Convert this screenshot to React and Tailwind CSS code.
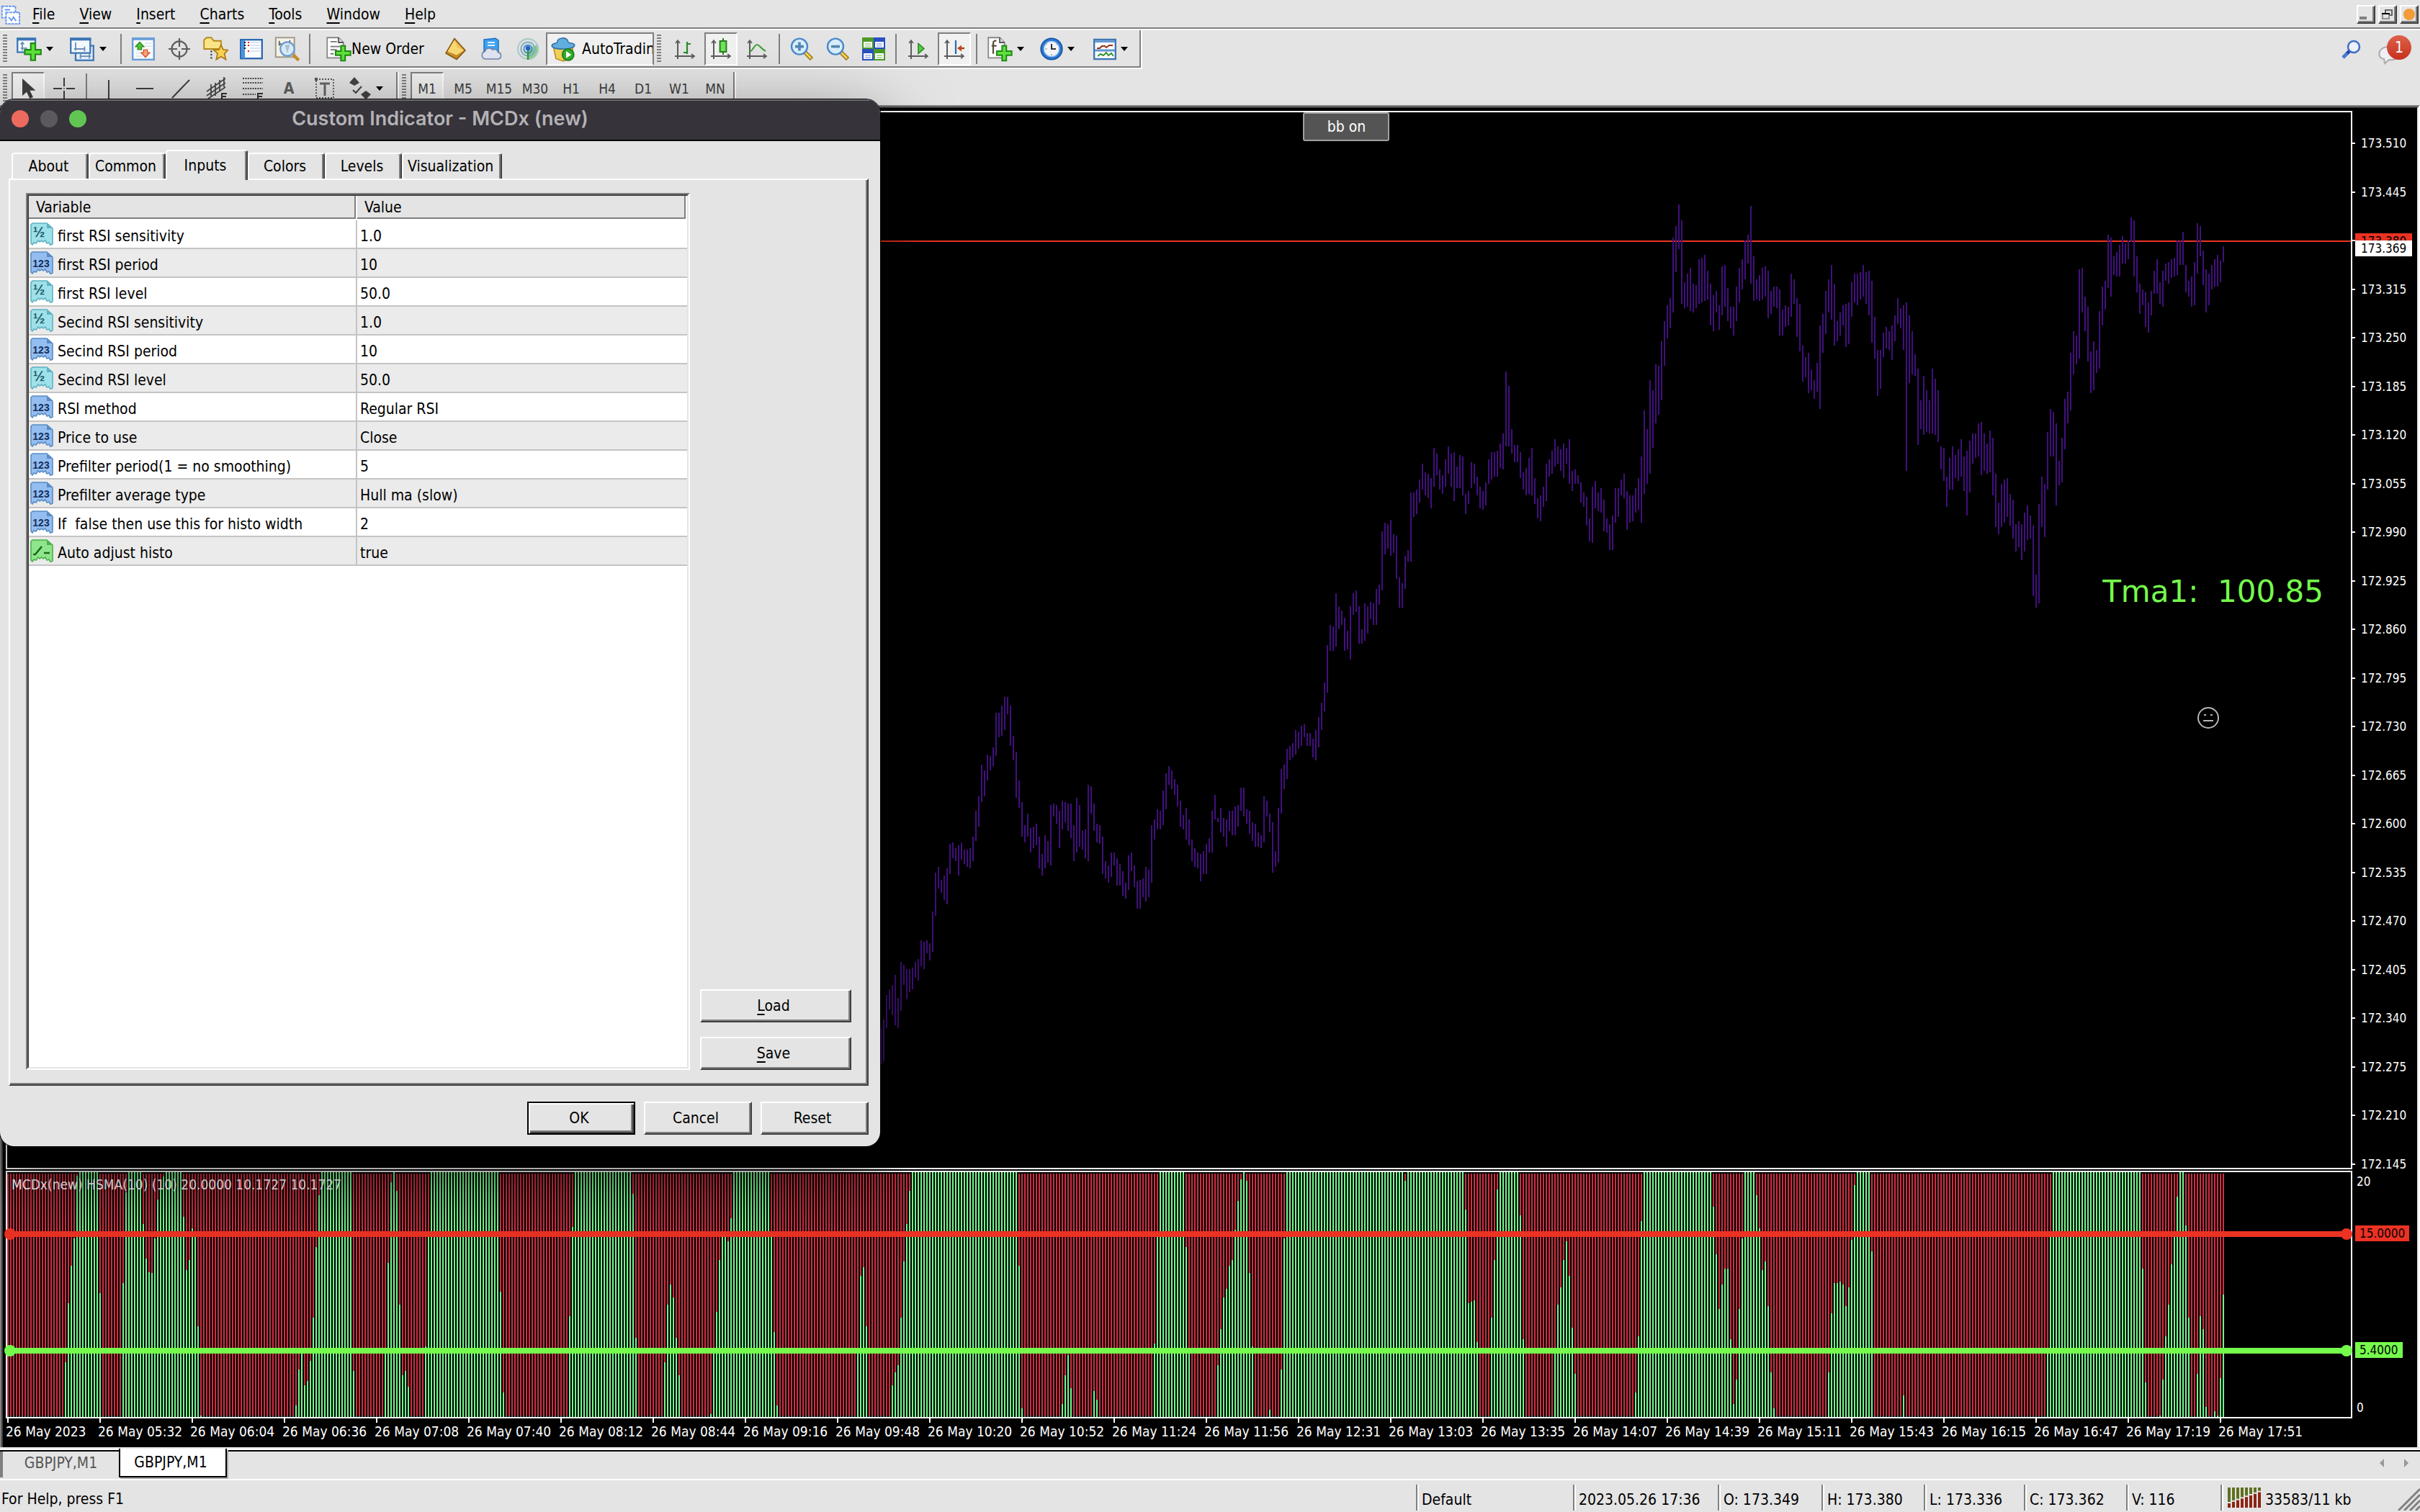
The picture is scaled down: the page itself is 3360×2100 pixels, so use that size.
import React from 'react';
import { clsx } from 'clsx';

const BEVEL =
  'border-2 border-t-white border-l-white border-r-[#404040] border-b-[#404040] shadow-[inset_-2px_-2px_#808080]';

const MENU = ['File', 'View', 'Insert', 'Charts', 'Tools', 'Window', 'Help'];
const TIMEFRAMES = ['M1', 'M5', 'M15', 'M30', 'H1', 'H4', 'D1', 'W1', 'MN'];
const DIALOG_TABS = ['About', 'Common', 'Inputs', 'Colors', 'Levels', 'Visualization'];

const INPUTS = [
  ['double', 'first RSI sensitivity', '1.0'],
  ['int', 'first RSI period', '10'],
  ['double', 'first RSI level', '50.0'],
  ['double', 'Secind RSI sensitivity', '1.0'],
  ['int', 'Secind RSI period', '10'],
  ['double', 'Secind RSI level', '50.0'],
  ['int', 'RSI method', 'Regular RSI'],
  ['int', 'Price to use', 'Close'],
  ['int', 'Prefilter period(1 = no smoothing)', '5'],
  ['int', 'Prefilter average type', 'Hull ma (slow)'],
  ['int', 'If  false then use this for histo width', '2'],
  ['bool', 'Auto adjust histo', 'true'],
];

const ASK = '173.380';
const BID = '173.369';
const PRICES = Array.from({ length: 22 }, (_, i) => (173.51 - i * 0.065).toFixed(3));

const TIMES = [
  '2023', '05:32', '06:04', '06:36', '07:08', '07:40', '08:12', '08:44', '09:16', '09:48', '10:20', '10:52', '11:24',
  '11:56', '12:31', '13:03', '13:35', '14:07', '14:39', '15:11', '15:43', '16:15', '16:47', '17:19', '17:51',
];

const STATUS = [
  ['Default', 'w-[218px]'],
  ['2023.05.26 17:36', 'w-[201px]'],
  ['O: 173.349', 'w-[144px]'],
  ['H: 173.380', 'w-[142px]'],
  ['L: 173.336', 'w-[139px]'],
  ['C: 173.362', 'w-[142px]'],
  ['V: 116', 'w-[131px]'],
];

// High/low pairs, one per minute. Every block has its own origin and scale.
const PRICE_BLOCKS = [
  {
    first: 303,
    top: 880,
    scale: 2.45,
    bars:
      '1343-1465 1313-1455 1230-1343 1210-1279 1196-1298 1161-1333 1240-1343 1117-1284 1127-1196 1142-1245 1142-1220 1137-1210 1117-1171 1107-1181 1044-1132 1049-1142 1044-1088 1053-1112 946-1083 813-960 ' +
      '794-867 838-882 823-906 799-921 715-818 710-764 730-774 720-823 710-769 735-784 735-794 730-799 691-774 603-706 554-657 446-573 465-554 412-500 416-465 387-451 ' +
      '269-416 269-353 245-348 216-328 216-274 245-382 348-431 402-559 500-593 573-691 652-710 612-691 661-745 657-730 647-720 691-799 750-823 686-799 706-779 583-789 ' +
      '578-622 583-647 603-730 568-666 573-642 578-671 578-696 652-774 559-745 583-725 671-735 666-764 514-774 519-612 578-671 647-710 652-715 691-818 774-833 789-848 ' +
      '745-828 745-789 764-857 784-857 808-892 848-902 755-872 745-808 789-862 843-936 838-936 833-897 794-911 804-897 652-848 632-701 598-666 603-666 534-652 475-598 ' +
      '451-514 465-529 495-549 514-588 568-657 617-666 593-701 632-720 701-774 730-794 745-799 750-843 740-818 715-818 696-745 603-745 549-632 627-642 593-676 627-691 ' +
      '632-725 603-671 603-686 588-686 583-657 524-603 524-622 598-647 603-681 642-706 647-725 676-725 686-730 554-710 568-622 612-676 642-813 740-794 593-779 461-612 ' +
      '446-529 392-495 382-431 372-421 328-412 333-392 314-382',
  },
  {
    first: 450,
    top: 560,
    scale: 3,
    bars:
      '1338-1392 1374-1428 1374-1428 1398-1476 1362-1488 1308-1434 1248-1362 1164-1284 1008-1206 924-1032 930-1032 792-1014 846-942 864-924 894-1032 948-1026 846-1068 792-882 780-870 846-1002 ' +
      '942-1002 834-990 846-960 828-900 834-924 774-924 756-840 534-780 498-630 504-606 486-636 546-624 552-732 726-852 750-852 636-774 612-660 372-660 372-474 360-462 ' +
      '318-414 252-360 288-384 294-396 312-438 186-348 210-300 276-360 300-378 234-348 180-294 210-348 204-408 264-354 216-354 222-384 378-462 366-420',
  },
  {
    first: 508,
    top: 260,
    scale: 2.6133,
    bars:
      '998-1092 1004-1077 1051-1119 1087-1165 1103-1171 1071-1155 988-1077 962-1061 962-1051 956-1051 930-1019 894-1024 669-941 721-941 878-967 936-998 936-998 962-1056 1035-1098 1019-1119 ' +
      '983-1113 946-1119 1056-1150 1129-1202 1119-1213 1087-1160 1004-1139 988-1051 956-1040 915-1014 941-1004 951-1030 930-1056 946-1004 915-1077 1030-1103 1024-1077 1045-1077 1071-1145 1108-1160 ' +
      '1124-1228 1202-1286 1087-1291 1066-1166 1108-1176 1092-1181 1134-1249 1202-1254 1223-1317 1192-1317 1092-1218 1092-1197 1061-1119 1040-1129 1103-1244 1119-1218 1119-1213 1092-1181 1056-1171 977-1218 ' +
      '810-1113 878-1077 700-1040 737-946 643-857 648-826 559-774 486-648 429-549 402-512 183-455 141-308 63-225 120-423 345-439 314-434 293-449 350-455 355-439 261-423 ' +
      '256-418 246-413 303-408 350-502 392-523 376-455 429-517 287-465 282-434 366-486 434-512 434-538 361-486 293-418 261-371 193-335 172-277 68-350 251-413 335-408 ' +
      '319-413 293-408 287-397 303-476 376-460 361-434 361-439 371-538 444-538 429-507 434-502 314-470 335-423 402-544 423-596 575-706 617-690 601-747 664-737 700-768 ' +
      '638-742 502-805 460-601 376-533 335-455 282-481 350-575 486-559 455-538 429-502 423-580 418-570 345-470 314-418 314-429 308-408 282-397 308-423 303-465 340-564 ' +
      '470-622 591-758 591-732 528-617 507-585 523-591 502-627 465-559 402-497 439-512 429-591 418-1030 465-711 523-679 606-685 659-936 774-878 685-899 737-889 774-894 ' +
      '659-894 695-899 737-925 941-1024 946-1066 1051-1160 983-1098 941-1098 972-1056 951-1066 915-1051 977-1103 956-1192 920-1108 894-1004 894-983 857-977 852-1045 894-1030 930-1040 ' +
      '883-1035 909-1119 1040-1233 1145-1260 1077-1233 1061-1218 1056-1197 1113-1228 1134-1275 1223-1322 1213-1307 1223-1354 1181-1322 1155-1281 1192-1275 1228-1484 1406-1526 1150-1511 1051-1233 1077-1270 ' +
      '889-1098 805-977 815-977 857-1155 993-1082 909-1071 768-951 742-857 601-810 523-679 538-643 298-622 293-455 397-523 434-632 596-747 559-737 591-674 449-659 361-502 ' +
      '340-444 172-366 183-397 251-319 235-324 209-324 178-277 204-277 193-261 110-199 120-324 251-382 350-460 371-429 382-507 418-528 376-465 303-387 261-387 345-423 ' +
      '303-434 277-340 272-350 261-329 256-324 193-319 193-282 162-282 282-382 340-397 324-434 272-429 131-314 141-251 230-355 298-455 314-429 282-371 261-361 246-361 ' +
      '267-345 214-272',
  },
];

const barX = (i) => 11 + i * 4;

const pricePath = PRICE_BLOCKS.map(({ first, top, scale, bars }) =>
  bars
    .split(' ')
    .map((bar, i) => {
      const [high, low] = bar.split('-').map((v) => top + Math.round(Number(v) / scale));
      return `M${barX(first + i)} ${high}V${low}`;
    })
    .join('')
).join('');

// [first bar, distance of each bar from the top]; a nested [n] stands for n bars of full height
const GREEN_RUNS = [
  [20, 264, 182, 130, 92, 5, [7], 168],
  [40, 154, 28, [5], 72, 120, 139, 140, 92, 38, 22, 6, [6], 62, 136, 122, 78, 90, 214, 338],
  [100, 324, 274, 252, 296, 290, 262, 202, 104, 32, [11], 276],
  [131, 250, 126, 14, 0, 26, 184, 282, 276, 298],
  [145, 242, 85, [24], 166, 306],
  [195, 200, 76, [20], 30, 230],
  [228, 264, 184, 156, 174, 230, 282],
  [244, 336, 248, 194, 122, 88, 88, 96, 64, [13], 82, 222, 324],
  [295, 252, 144, 132, 214],
  [307, 296, 278, 268, 202, 124, 72, 26, [37], 130, 328],
  [366, 322, 282, 254, 300],
  [377, 304, 316],
  [398, 238, 86, [9], 104, 250],
  [420, 268, 218, 174, 162, 130, 122, 80, 40, 10, 0, 12, 140, 242],
  [438, 330],
  [442, 274, 92, [41], 12, [20], 52, 182, 180, 178, 236],
  [515, 202, 122, 24, [7], 60, 232],
  [537, 250, 184, 160, 122, 96, 144, 216, 280],
  [565, 306, 228, 68, [24], 48, 114, 190, 156, 134, 134, 232, 322, 288, 190, 92, [4], 32, 78, 136, 124, 186, 278, 328],
  [632, 278, 196, 154, 154, 152, 156, 186, 160, 94, 18, [5], 110],
  [658, 310],
  [708, 250, 90, [31], 134, 292],
  [747, 338, 288, 228, 184, 128, 90, 34, 0, 0, 74, 202],
  [760, 280, 200, 218, 326],
  [766, 332, 338, 286, 170],
];

const greenPath = GREEN_RUNS.map(([first, ...items]) =>
  items
    .flatMap((v) => (Array.isArray(v) ? Array(v[0]).fill(0) : v))
    .map((v, i) => `M${barX(first + i)} ${v}V340`)
    .join('')
).join('');

const allBars = (from, to) => Array.from({ length: 770 }, (_, i) => `M${barX(i)} ${from}V${to}`).join('');

function Icon({ children, size = 'size-8' }) {
  return (
    <svg viewBox="0 0 16 16" className={clsx('shrink-0', size)} aria-hidden="true">
      {children}
    </svg>
  );
}

function Plus() {
  return (
    <path
      d="M9.500 6h2.600v3.300h3.300v2.600h-3.300v3.300H9.500v-3.300H6.200V9.300h3.300z"
      fill="#5fe03c"
      stroke="#1f8a14"
      strokeWidth=".9"
    />
  );
}

function Axes() {
  return (
    <g stroke="#5c5c5c" fill="none">
      <path d="M3 2v13M1 13h13" />
      <path d="M1.500 4L3 2l1.500 2M12.500 11.500L14.500 13l-2 1.500" strokeWidth=".8" />
    </g>
  );
}

const NewChartIcon = () => (
  <Icon size="size-9">
    <rect x="1" y="1.500" width="11" height="8.500" fill="#f4f9ff" stroke="#3d76b5" />
    <path d="M.5 2h12" stroke="#3d76b5" strokeWidth="1.600" />
    <path d="M4 4v5M3 5l1-1 1 1M3 7.500h4" stroke="#6e8fb3" strokeWidth=".8" fill="none" />
    <path d="M9.200 4.500h2.800v4h3.500v2.800H12v3.700H9.200v-3.700H5.500V8.500h3.700z" fill="#5fe03c" stroke="#1f8a14" strokeWidth=".9" />
  </Icon>
);

const ProfilesIcon = () => (
  <Icon size="size-9">
    <rect x="4" y="6" width="11" height="9" fill="#e6f1fd" stroke="#3d76b5" />
    <path d="M6.500 12.500h7M7 11v3M12.500 11v3" stroke="#6e8fb3" strokeWidth=".8" />
    <rect x="1" y="1.500" width="12" height="9" fill="#f4f9ff" stroke="#3d76b5" />
    <path d="M.5 2h13" stroke="#3d76b5" strokeWidth="1.600" />
    <path d="M4 4v5M3 8h7M9.500 6.500v3" stroke="#6e8fb3" strokeWidth=".8" />
  </Icon>
);

const MarketWatchIcon = () => (
  <Icon>
    <rect x=".6" y=".6" width="14.800" height="14.800" fill="#fbfcfe" stroke="#6a9fdb" strokeWidth="1.200" />
    <path d="M1 1.200h14" stroke="#6a9fdb" strokeWidth="1.400" />
    <path d="M2.500 5h2M2.500 8h2M9 4h5M9 6h5M3 11h4M3 13h4" stroke="#dde3ea" strokeWidth=".8" />
    <path d="M5.500 3.200l3 3.300H6.800v2H4.200v-2H2.500z" fill="#4cc436" stroke="#268517" strokeWidth=".6" />
    <path d="M9.500 13.800l-3-3.300h1.700v-2h2.600v2h1.700z" fill="#f9a27c" stroke="#d2491d" strokeWidth=".6" />
  </Icon>
);

const DataWindowIcon = () => (
  <Icon>
    <g stroke="#5f5f5f" fill="none">
      <circle cx="8" cy="8" r="5.300" strokeWidth="1.100" />
      <path d="M8 .500v6M8 9.500v6M.500 8h6M9.500 8h6" strokeWidth="1.100" />
    </g>
  </Icon>
);

const NavigatorIcon = () => (
  <Icon size="size-9">
    <path d="M1 8V2.500L2.500 1h3L7 3h4.500v5z" fill="#fbe588" stroke="#b58a1d" strokeWidth=".8" />
    <path d="M5.500 9v6" stroke="#404040" strokeDasharray="1 1" />
    <path
      d="M11.500 5.500l1.300 2.900 3.100.3-2.300 2.100.8 3.700-2.900-1.800-2.900 1.800.8-3.700L7 8.700l3.200-.3z"
      fill="#fbd551"
      stroke="#b07d14"
      strokeWidth=".8"
    />
  </Icon>
);

const TerminalIcon = () => (
  <Icon>
    <rect x=".6" y="1.600" width="14.800" height="13" fill="#fff" stroke="#2f6db5" strokeWidth="1.200" />
    <path d="M2.300 2v12.400" stroke="#4b93e0" strokeWidth="2.400" />
    <path d="M3 3.500h1M3 5.500h1M3 7.500h1" stroke="#111" />
    <path d="M5.500 3.500h1M5.500 5.500h1M5.500 9.500h1" stroke="#e11" />
    <path d="M7 3.500h7M7 5.500h7M7 7.500h7M7 9.500h7" stroke="#cfdcf5" strokeWidth=".8" />
  </Icon>
);

const TesterIcon = () => (
  <Icon size="size-9">
    <rect x=".8" y="1" width="11.500" height="12" fill="#f6f3ea" stroke="#a39d8a" strokeWidth=".9" />
    <path d="M3 3v3M9.500 2.500v3M3 4.500l2 1" stroke="#666" strokeWidth=".8" />
    <path d="M11.500 11.500l3.500 3.500" stroke="#c4902a" strokeWidth="2" />
    <circle cx="8" cy="8" r="4.300" fill="#d4e9fbdd" stroke="#6d9dd0" />
    <path d="M6.500 5.500l1.500 5 1.500-5z" fill="#a9bfd2" />
  </Icon>
);

const NewOrderIcon = () => (
  <Icon size="size-9">
    <path d="M1 1h7l3 3v9.500H1z" fill="#fff" stroke="#888" strokeWidth=".8" />
    <path d="M8 1v3h3" fill="#ddd" stroke="#555" strokeWidth=".8" />
    <path d="M3 3.500h4M3 6.500h6M3 8.500h4M3 11h2" stroke="#777" strokeWidth=".8" />
    <Plus />
  </Icon>
);

const GoldIcon = () => (
  <Icon>
    <path d="M7 .8L14.500 9 8.500 15.200 1 11z" fill="#c98e26" stroke="#8a5a12" strokeWidth=".8" />
    <path d="M7 1.800L13.500 9 8.500 12.200 2.200 9.800z" fill="#f8d976" />
    <path d="M7 1.800L9 7l4.500 2" fill="#efc14e" />
  </Icon>
);

const CloudIcon = () => (
  <Icon>
    <path d="M2.500 1.500L10.500.600l2 1.400v8h-10z" fill="#3fa2f2" stroke="#1a6dc2" strokeWidth=".7" />
    <path d="M5 3.500h5M5 5.500h5" stroke="#dff1ff" strokeWidth="1" />
    <path
      d="M3.500 15a2.700 2.700 0 01-.3-5.300 3 3 0 015.200-1.200 2.600 2.600 0 013.800 1.800 2.400 2.400 0 01.3 4.700z"
      fill="#dfe5f2"
      stroke="#7484ab"
      strokeWidth=".8"
    />
  </Icon>
);

const SignalIcon = () => (
  <Icon>
    <path d="M8 8v7.500A7.500 7.500 0 0014.800 5z" fill="#68c06a" opacity=".7" />
    <g fill="none" strokeWidth="1">
      <circle cx="8" cy="8" r="7" stroke="#a8c9c6" />
      <circle cx="8" cy="8" r="4.800" stroke="#7fb0c4" />
      <circle cx="8" cy="8" r="2.800" stroke="#4b8dc8" />
    </g>
    <circle cx="8" cy="7.500" r="1.600" fill="#1f63c4" />
    <path d="M8 9v6.500" stroke="#2f9b35" strokeWidth="1.200" />
  </Icon>
);

const ExpertIcon = () => (
  <Icon size="size-9">
    <path d="M2 7l1.500 7L8 15.500l5-2L14 7z" fill="#f3d15a" stroke="#bb9224" strokeWidth=".7" />
    <path
      d="M1 6C1 4.200 3.800 4.800 4.200 4 4.500.800 10 .200 11 3.500c.5 1.500 4 .3 4 2.300C15 8.500 1 9 1 6z"
      fill="#63aee0"
      stroke="#2d71a8"
      strokeWidth=".7"
    />
    <circle cx="11" cy="11.500" r="3.600" fill="#33ad2c" stroke="#1b7a17" strokeWidth=".7" />
    <path d="M9.800 9.300v4.400l3.200-2.200z" fill="#fff" />
  </Icon>
);

const BarChartIcon = () => (
  <Icon>
    <Axes />
    <path d="M9.500 3v8.500M9.500 4.500h2.500M7 10.500h2.500" stroke="#2c8a28" strokeWidth="1.100" />
  </Icon>
);

const CandleIcon = () => (
  <Icon>
    <Axes />
    <path d="M9.500 .500V12" stroke="#2c7d20" />
    <rect x="7.300" y="2.500" width="4.400" height="7.500" fill="#6fe35a" stroke="#2c7d20" />
  </Icon>
);

const LineChartIcon = () => (
  <Icon>
    <Axes />
    <path d="M3 10c2-1 3.500-5 5-5s3 3 6 4.500" stroke="#43a33c" strokeWidth="1.100" fill="none" />
  </Icon>
);

const ZoomIcon = ({ plus }) => (
  <Icon>
    <path d="M10.500 10.500l4.500 4.500" stroke="#a07a1d" strokeWidth="3" />
    <path d="M10.500 10.500l4 4" stroke="#f3d557" strokeWidth="1.400" />
    <circle cx="6.500" cy="6.300" r="5.500" fill="#d8eefc" stroke="#4c8acb" strokeWidth="1.200" />
    <path d={plus ? 'M3.500 6.300h6M6.500 3.300v6' : 'M3.500 6.300h6'} stroke="#5487ae" strokeWidth="1.800" />
  </Icon>
);

const TileIcon = () => (
  <Icon>
    <path d="M0 0h8v8H0z" fill="#4d9928" />
    <path d="M8 0h8v8H8zM0 8h8v8H0z" fill="#2750c0" />
    <path d="M8 8h8v8H8z" fill="#4d9928" />
    <path d="M1 3h6v4H1zM9 3h6v4H9zM1 11h6v4H1zM9 11h6v4H9z" fill="#fff" />
    <path d="M2 4.500h4M2 6h4M10 12.500h4M10 14h4" stroke="#b5dba4" />
    <path d="M10 4.500h4M10 6h4M2 12.500h4M2 14h4" stroke="#b3c4f0" />
  </Icon>
);

const AutoScrollIcon = () => (
  <Icon>
    <Axes />
    <path d="M8 4.200v7L12 7.700z" fill="#5dc84d" stroke="#2a8f22" strokeWidth=".8" />
  </Icon>
);

const ChartShiftIcon = () => (
  <Icon>
    <Axes />
    <path d="M9 2v9.500" stroke="#2a6aa8" strokeWidth="1.100" />
    <path d="M15 7.500h-3" stroke="#a83a12" strokeWidth="1.200" />
    <path d="M10 7.500l3-2.200v4.400z" fill="#c2481a" />
  </Icon>
);

const IndicatorsIcon = () => (
  <Icon size="size-9">
    <path d="M1 1h7l3 3v9.500H1z" fill="#fff" stroke="#888" strokeWidth=".8" />
    <path d="M8 1v3h3" fill="#ddd" stroke="#555" strokeWidth=".8" />
    <path d="M6 3c-2-.5-2 1-2 2v6M3 6h3" stroke="#5a4f3a" fill="none" />
    <Plus />
  </Icon>
);

const ClockIcon = () => (
  <Icon>
    <circle cx="8" cy="8" r="7.400" fill="#2b79d6" stroke="#144f9c" strokeWidth=".8" />
    <circle cx="8" cy="8" r="5.300" fill="#f3f5f8" stroke="#9cc3ee" strokeWidth=".6" />
    <path d="M8 4.500V8h3" stroke="#333" fill="none" />
    <path d="M8 11.500v1M3.800 8h1M11.500 5l.7-.6M4.500 5l-.6-.6" stroke="#999" strokeWidth=".7" />
  </Icon>
);

const TemplatesIcon = () => (
  <Icon>
    <rect x=".6" y="1.500" width="14.800" height="13.500" fill="#fff" stroke="#3d76b5" strokeWidth="1.200" />
    <path d="M1 2.800h14M1 9h14" stroke="#5c95d4" strokeWidth="1.400" />
    <path d="M2.500 7.500h2l1.500-1.500h2l1 1 2-1.500h2.500" stroke="#9c2f14" fill="none" />
    <path d="M3 13l2-1.500 2 1 2-2 1.500 2 2-1.500 1.500 2" stroke="#379034" fill="none" />
  </Icon>
);

const CursorIcon = () => (
  <Icon>
    <path d="M4 1v12l3-2.600L9.200 15l2.300-1-2.300-4.600h4z" fill="#3f3f3f" />
  </Icon>
);

const CrosshairIcon = () => (
  <Icon>
    <path d="M8 .500v6M8 9.500v6M.500 8h6M9.500 8h6M7.700 8h.6" stroke="#3f3f3f" />
  </Icon>
);

const LineIcon = ({ d }) => (
  <Icon>
    <path d={d} stroke="#3f3f3f" fill="none" />
  </Icon>
);

const ChannelIcon = () => (
  <Icon>
    <path d="M1 10L14 1M1 13L14 4M2 15L14 7M4 5v9M7 4v9M10 2v8M13 0v7" stroke="#4a4a4a" strokeWidth=".9" />
    <path d="M11.500 16v-4.500H15M11.500 13.500h3" stroke="#333" fill="none" />
  </Icon>
);

const FiboIcon = () => (
  <Icon>
    <path d="M1 1h14M1 4h14M1 8h14M1 12h9" stroke="#4a4a4a" strokeDasharray="1 .7" />
    <path d="M11.500 16v-4.500H15M11.500 13.500h3" stroke="#333" fill="none" />
  </Icon>
);

const LabelIcon = () => (
  <Icon>
    <rect x="2" y="1.500" width="12" height="13" fill="none" stroke="#555" strokeDasharray="1 1" strokeWidth=".9" />
    <path d="M4.500 4.500h7M8 4.500V13" stroke="#666" strokeWidth="1.500" />
    <path d="M1 .500h2v2H1z" fill="#555" />
  </Icon>
);

const ArrowsIcon = () => (
  <Icon>
    <path d="M4 0l3.500 4L4 6 .500 4zM12 15.500L8.500 12 12 9.500l3.500 2.500z" fill="#444" />
    <path d="M3 9l2 2 4-4.500" stroke="#444" fill="none" />
  </Icon>
);

const VARIABLE_COLORS = {
  double: ['#9fe1ea', '#5fb2c2', '#1f5d6c'],
  int: ['#94bdf0', '#5a8cc4', '#12315f'],
  bool: ['#8fe58b', '#4faf4c', '#1c6a1b'],
};

function VariableIcon({ type }) {
  const [fill, edge, ink] = VARIABLE_COLORS[type];
  return (
    <svg viewBox="0 0 16 16" className="size-8 shrink-0" aria-hidden="true">
      <path
        d="M.5 1.500L1.500.500h10l4 3.500v11l-1.500.700-1-1.700-1.500.500-1-2-1.500 1-1-1-1.500 1-1-1-1.500 2-1.500-.5-1 1.500L.500 14.500z"
        fill={fill}
        stroke={edge}
        strokeWidth=".8"
      />
      <path d="M11.500.500V4h4z" fill={edge} />
      {type === 'bool' ? (
        <path d="M2 10.500h1.500L8 5M9.500 9.500h4" stroke={ink} strokeWidth="1.300" fill="none" />
      ) : (
        <text
          x={type === 'int' ? 7.5 : 6}
          y={type === 'int' ? 11 : 10}
          fontSize={type === 'int' ? 7 : 10}
          fontWeight="700"
          textAnchor="middle"
          fontFamily="Liberation Sans, sans-serif"
          fill={ink}
        >
          {type === 'int' ? '123' : '½'}
        </text>
      )}
    </svg>
  );
}

function Caret() {
  return (
    <svg viewBox="0 0 10 6" className="h-[6px] w-[10px] shrink-0" aria-hidden="true">
      <path d="M0 0h10L5 6z" fill="#000" />
    </svg>
  );
}

function ToolButton({ label, pressed, caret, children }) {
  return (
    <button
      aria-label={label}
      className={clsx(
        'flex h-[46px] shrink-0 items-center gap-1.5',
        caret ? 'w-[74px] pl-2' : 'mx-0.5 w-[46px] justify-center',
        pressed && 'border-2 border-t-[#808080] border-l-[#808080] border-r-white border-b-white bg-[#f1f1f1]'
      )}
    >
      {children}
      {caret && <Caret />}
    </button>
  );
}

const Grip = () => (
  <span className="ml-1 h-10 w-1.5 shrink-0 bg-[repeating-linear-gradient(#808080_0_2px,#e4e4e4_2px_4px)]" />
);

const Separator = () => <span className="mx-[5px] h-[42px] w-0.5 shrink-0 bg-[#808080]" />;

const MenuBar = () => (
  <header className="flex h-[42px] shrink-0 items-center justify-between border-b-2 border-white shadow-[inset_0_-2px_#808080]">
    <nav className="flex items-center">
      <svg viewBox="0 0 30 30" className="size-7" aria-hidden="true">
        <g fill="#fff" stroke="#6496f0" strokeWidth="2" strokeDasharray="4 1">
          <rect x="3" y="3" width="20" height="17" />
          <rect x="9" y="12" width="20" height="17" />
        </g>
        <path d="M13 19l4 5 3-5 4 6M7 8h8" stroke="#6496f0" strokeWidth="2" fill="none" />
      </svg>
      {MENU.map((item) => (
        <button key={item} className="px-[17px]">
          <u className="decoration-2 underline-offset-4">{item[0]}</u>
          {item.slice(1)}
        </button>
      ))}
    </nav>
    <div className="flex gap-1 pr-0.5">
      <button aria-label="Minimize" className={clsx('flex size-[26px] items-end px-0.5 pb-1', BEVEL)}>
        <span className="h-1 w-2.5 bg-[#808080]" />
      </button>
      <button aria-label="Restore" className={clsx('grid size-[26px] place-items-center', BEVEL)}>
        <svg viewBox="0 0 18 18" className="size-[18px]" aria-hidden="true">
          <path d="M6 8V3h9v7h-4M6 3h9" stroke="#666" strokeWidth="2" fill="none" />
          <path d="M2 8h9v7H2z" stroke="#777" strokeWidth="1.500" fill="#e4e4e4" />
          <path d="M1 8h11" stroke="#000" strokeWidth="2" />
        </svg>
      </button>
      <button aria-label="Close" className={clsx('grid size-[26px] place-items-center', BEVEL)}>
        <span className="size-4 rounded-full bg-[#f29b38]" />
      </button>
    </div>
  </header>
);

const MainToolbar = () => (
  <div className="flex h-[54px] shrink-0 items-center justify-between">
    <div className="flex h-full items-center border-r-2 border-b-2 border-white shadow-[inset_-2px_-2px_#808080]">
      <Grip />
      <span className="w-1" />
      <ToolButton label="New chart" caret><NewChartIcon /></ToolButton>
      <ToolButton label="Profiles" caret><ProfilesIcon /></ToolButton>
      <Separator />
      <ToolButton label="Market Watch"><MarketWatchIcon /></ToolButton>
      <ToolButton label="Data Window"><DataWindowIcon /></ToolButton>
      <ToolButton label="Navigator"><NavigatorIcon /></ToolButton>
      <ToolButton label="Terminal"><TerminalIcon /></ToolButton>
      <ToolButton label="Strategy Tester"><TesterIcon /></ToolButton>
      <Separator />
      <button className="flex h-[46px] w-[172px] items-center pl-4">
        <NewOrderIcon />
        <span className="whitespace-nowrap">New Order</span>
      </button>
      <ToolButton label="MetaEditor"><GoldIcon /></ToolButton>
      <ToolButton label="Virtual Hosting"><CloudIcon /></ToolButton>
      <ToolButton label="Signals"><SignalIcon /></ToolButton>
      <button className="flex h-[46px] w-[150px] items-center gap-2 overflow-hidden border-2 border-t-[#808080] border-l-[#808080] border-r-[#808080] border-b-white bg-[#f1f1f1] pl-1">
        <ExpertIcon />
        <span className="whitespace-nowrap">AutoTrading</span>
      </button>
      <Grip />
      <span className="w-2" />
      <ToolButton label="Bar Chart"><BarChartIcon /></ToolButton>
      <ToolButton label="Candlesticks" pressed><CandleIcon /></ToolButton>
      <ToolButton label="Line Chart"><LineChartIcon /></ToolButton>
      <Separator />
      <ToolButton label="Zoom In"><ZoomIcon plus /></ToolButton>
      <ToolButton label="Zoom Out"><ZoomIcon /></ToolButton>
      <ToolButton label="Tile Windows"><TileIcon /></ToolButton>
      <Separator />
      <ToolButton label="Auto Scroll"><AutoScrollIcon /></ToolButton>
      <ToolButton label="Chart Shift" pressed><ChartShiftIcon /></ToolButton>
      <Separator />
      <ToolButton label="Indicators" caret><IndicatorsIcon /></ToolButton>
      <ToolButton label="Periods" caret><ClockIcon /></ToolButton>
      <ToolButton label="Templates" caret><TemplatesIcon /></ToolButton>
    </div>
    <div className="flex items-center gap-6 pr-3">
      <button aria-label="Search">
        <svg viewBox="0 0 28 28" className="size-7" aria-hidden="true">
          <path d="M3 25l9-9" stroke="#4a78cf" strokeWidth="5" />
          <path d="M9 19l4-4" stroke="#1c3fae" strokeWidth="4" />
          <circle cx="18" cy="10" r="8" fill="#eef1fb" stroke="#3f6dcb" strokeWidth="2.500" />
        </svg>
      </button>
      <button aria-label="Messages" className="relative h-11 w-[46px]">
        <svg viewBox="0 0 46 44" className="h-11 w-[46px]" aria-hidden="true">
          <path d="M12 18c-14 2-13 17-4 17l1 6 6-5c10 1 16-3 14-10z" fill="#eeeef4" stroke="#aaa" strokeWidth="2" />
        </svg>
        <span className="absolute top-0.5 right-0 grid size-[34px] place-items-center rounded-full bg-linear-to-b from-[#dd6149] to-[#c62f1b] text-white">
          1
        </span>
      </button>
    </div>
  </div>
);

const ChartToolbar = () => (
  <div className="flex h-[50px] shrink-0 items-center pt-1 text-[#404040]">
    <Grip />
    <span className="w-1" />
    <ToolButton label="Cursor" pressed><CursorIcon /></ToolButton>
    <ToolButton label="Crosshair"><CrosshairIcon /></ToolButton>
    <Separator />
    <ToolButton label="Vertical Line"><LineIcon d="M8 2v13" /></ToolButton>
    <ToolButton label="Horizontal Line"><LineIcon d="M2 8h12" /></ToolButton>
    <ToolButton label="Trendline"><LineIcon d="M2 14.500L14 2" /></ToolButton>
    <ToolButton label="Equidistant Channel"><ChannelIcon /></ToolButton>
    <ToolButton label="Fibonacci Retracement"><FiboIcon /></ToolButton>
    <ToolButton label="Text"><span className="font-bold text-[#606060]">A</span></ToolButton>
    <ToolButton label="Text Label"><LabelIcon /></ToolButton>
    <ToolButton label="Arrows" caret><ArrowsIcon /></ToolButton>
    <span className="h-full w-1 border-r-2 border-white bg-[#808080]" />
    <Grip />
    <span className="w-1" />
    {TIMEFRAMES.map((tf) => (
      <ToolButton key={tf} label={tf} pressed={tf === 'M1'}>
        <span className="text-[19px]">{tf}</span>
      </ToolButton>
    ))}
    <span className="h-full w-1 border-r-2 border-white bg-[#808080]" />
  </div>
);

const LevelLine = ({ position, color }) => (
  <div className={clsx('absolute -right-0.5 -left-1 flex h-4 items-center', position)}>
    <span className={clsx('size-4 rounded-full', color)} />
    <span className={clsx('-mx-1 h-2 flex-1', color)} />
    <span className={clsx('size-4 rounded-full', color)} />
  </div>
);

const ChartWindow = () => (
  <main className="flex min-h-0 flex-1 border-t-2 border-r-2 border-l-2 border-t-[#808080] border-r-white border-l-[#808080]">
    <div className="flex min-w-0 flex-1 flex-col border-t-2 border-r-2 border-l-2 border-[#404040] border-r-[#e4e4e4] bg-black pt-1 pl-1 text-[17px] text-white">
      <div className="flex min-h-0 flex-1">
        <section className="relative min-w-0 flex-1 border-2 border-white">
          <svg
            viewBox="10 156 3254 1466"
            preserveAspectRatio="none"
            shapeRendering="crispEdges"
            className="absolute inset-0 size-full"
            role="img"
            aria-label="GBPJPY M1 price chart"
          >
            <path d="M10 335H3264" stroke="#eb3223" strokeWidth="2" />
            <path d={pricePath} stroke="#41107c" strokeWidth="2" />
          </svg>
          <button className="absolute top-0 left-[55.3%] h-10 w-[120px] rounded-[3px] border-2 border-[#a0a0a0] bg-[#545454] text-[21px]">
            bb on
          </button>
          <p className="absolute top-[44%] right-[38px] text-[42px] leading-none whitespace-pre text-[#75fb4c] [font-family:'DejaVu_Sans',sans-serif]">
            Tma1:  100.85
          </p>
          <svg viewBox="0 0 32 32" className="absolute top-[56.3%] right-[182px] size-8" aria-hidden="true">
            <circle cx="16" cy="16" r="14" fill="none" stroke="#b4b4b4" strokeWidth="2" />
            <path d="M10 12h3M19 12h3M9 20h14" stroke="#b4b4b4" strokeWidth="2" />
          </svg>
        </section>
        <aside className="relative -mb-1 flex w-[90px] shrink-0 flex-col justify-between pt-[34px]">
          {PRICES.map((price) => (
            <div key={price} className="flex h-[22px] items-center gap-2">
              <span className="h-0.5 w-1 bg-white" />
              {price !== ASK && price}
            </div>
          ))}
          <span className="absolute top-[170px] left-1 h-[22px] bg-[#eb3223] px-2 leading-[22px] text-black">{ASK}</span>
          <span className="absolute top-[180px] left-1 h-[22px] bg-white px-2 leading-[22px] text-black">{BID}</span>
        </aside>
      </div>
      <div className="mt-0.5 flex h-[344px] shrink-0">
        <section className="relative min-w-0 flex-1 border-2 border-white">
          <svg
            viewBox="10 0 3254 340"
            preserveAspectRatio="none"
            shapeRendering="crispEdges"
            className="absolute inset-0 size-full"
            role="img"
            aria-label="MCDx histogram"
          >
            <path d={allBars(2, 338)} stroke="#cf2f42" strokeWidth="2" />
            <path d={allBars(338, 340)} stroke="#666" strokeWidth="2" />
            <path d={greenPath} stroke="#74f98c" strokeWidth="2" />
          </svg>
          <LevelLine position="top-[78px]" color="bg-[#eb3223]" />
          <LevelLine position="top-[240px]" color="bg-[#75fb4c]" />
          <p className="relative pt-1 pl-1.5 text-[19px]">MCDx(new) HSMA(10) (10) 20.0000 10.1727 10.1727</p>
        </section>
        <aside className="relative flex w-[90px] shrink-0 flex-col justify-between pt-1 pb-1 pl-1.5">
          <span className="leading-[22px]">20</span>
          <span className="leading-[22px]">0</span>
          <span className="absolute top-[76px] left-1 h-[22px] bg-[#eb3223] px-1.5 leading-[22px] text-black">15.0000</span>
          <span className="absolute top-[238px] left-1 h-[22px] bg-[#75fb4c] px-1.5 leading-[22px] text-black">5.4000</span>
        </aside>
      </div>
      <div className="flex h-10 shrink-0 text-[19px]">
        {TIMES.map((time) => (
          <div key={time} className="w-32 shrink-0 whitespace-nowrap">
            <div className="ml-0.5 h-1.5 w-0.5 bg-white" />
            <div className="leading-6">26 May {time}</div>
          </div>
        ))}
      </div>
    </div>
  </main>
);

const ChartTabs = () => (
  <div className="flex h-[46px] shrink-0 items-start justify-between border-b-2 border-white shadow-[inset_0_2px_#e4e4e4,inset_0_4px_#fff,inset_0_6px_#000]">
    <div className="flex">
      <button className="mt-1.5 h-9 w-[165px] border-l-4 border-[#808080] pb-1 text-[#555]">GBPJPY,M1</button>
      <button className="mt-0.5 h-10 w-[150px] border-2 border-t-0 border-black bg-white pr-1.5 shadow-[2px_2px_#aaa]">
        GBPJPY,M1
      </button>
    </div>
    <div className="flex gap-7 pt-4 pr-4">
      <button aria-label="Scroll left">
        <svg viewBox="0 0 6 12" className="h-3 w-1.5" aria-hidden="true"><path d="M6 0v12L0 6z" fill="#999" /></svg>
      </button>
      <button aria-label="Scroll right">
        <svg viewBox="0 0 6 12" className="h-3 w-1.5" aria-hidden="true"><path d="M0 0v12l6-6z" fill="#999" /></svg>
      </button>
    </div>
  </div>
);

const StatusBar = () => (
  <footer className="flex h-11 shrink-0 items-center pt-1">
    <span className="flex-1 pt-1 pl-0.5">For Help, press F1</span>
    {STATUS.map(([text, width]) => (
      <span key={text} className={clsx('h-9 border-l-2 border-[#808080] pt-2 pl-1.5 whitespace-nowrap shadow-[inset_2px_0_#fff]', width)}>
        {text}
      </span>
    ))}
    <span className="relative flex h-9 w-[277px] gap-1 border-l-2 border-[#808080] pl-2 shadow-[inset_2px_0_#fff]">
      <svg viewBox="0 0 48 28" className="mt-1 h-7 w-12" aria-hidden="true">
        {Array.from({ length: 8 }, (_, i) => (
          <g key={i}>
            <rect x={i * 6} y="0" width="4" height={20 - i * 2.2} fill="#5f7020" />
            <rect x={i * 6} y={22 - i * 2.2} width="4" height={6 + i * 2.2} fill="#8c2413" />
          </g>
        ))}
      </svg>
      <span className="pt-2">33583/11 kb</span>
      <svg viewBox="0 0 32 32" className="absolute right-0 bottom-0 size-8" aria-hidden="true">
        <path d="M2 32L32 2M10 32L32 10M18 32l14-14M26 32l6-6" stroke="#808080" strokeWidth="3" />
      </svg>
    </span>
  </footer>
);

const DialogButton = ({ children, wide, isDefault }) => (
  <button
    className={clsx(
      'h-[46px] pr-1.5',
      wide ? 'w-[210px]' : 'w-[150px]',
      isDefault
        ? 'border-2 border-black shadow-[inset_2px_2px_#fff,inset_-2px_-2px_#404040,inset_-4px_-4px_#808080]'
        : BEVEL
    )}
  >
    {children}
  </button>
);

const IndicatorDialog = () => (
  <div
    role="dialog"
    aria-labelledby="dialog-title"
    className="absolute top-[138px] left-0 w-[1222px] overflow-hidden rounded-[20px] bg-[#e4e4e4] shadow-[0_0_0_1px_#000,0_36px_100px_rgba(0,0,0,0.6)]"
  >
    <div className="relative flex h-[58px] items-center justify-center border-t-2 border-b-2 border-t-[#6b696e] border-b-black bg-[#36333a] pb-1">
      <div className="absolute left-4 flex gap-4">
        <button aria-label="Close dialog" className="size-6 rounded-full bg-[#ed6a5e]" />
        <button aria-label="Minimize dialog" className="size-6 rounded-full bg-[#5b585e]" />
        <button aria-label="Zoom dialog" className="size-6 rounded-full bg-[#61c554]" />
      </div>
      <h1 id="dialog-title" className="text-[27px] font-semibold text-[#b4b2b6] [font-family:Inter,sans-serif]">
        Custom Indicator - MCDx (new)
      </h1>
    </div>

    <div role="tablist" className="flex items-end pt-3 pl-4">
      {DIALOG_TABS.map((tab) => (
        <button
          key={tab}
          role="tab"
          aria-selected={tab === 'Inputs'}
          className={clsx(
            'rounded-t-[4px] border-t-2 border-r-2 border-l-2 border-white border-r-[#404040] pr-2.5 pl-1.5 shadow-[inset_-2px_0_#808080]',
            tab === 'Inputs' ? 'relative -mb-0.5 h-[42px] min-w-[114px] bg-[#e4e4e4]' : 'h-9 min-w-[107px]'
          )}
        >
          {tab}
        </button>
      ))}
    </div>

    <div className="mr-4 ml-3 flex border-2 border-white border-r-[#404040] border-b-[#404040] pt-[18px] pr-[22px] pb-5 pl-[22px] shadow-[inset_-2px_-2px_#808080]">
      <div className="min-h-[1218px] flex-1 border-2 border-t-[#808080] border-r-white border-b-white border-l-[#808080] bg-white">
        <div className="min-h-[1214px] border-2 border-t-[#404040] border-r-[#e4e4e4] border-b-[#e4e4e4] border-l-[#404040]">
          <table className="w-full border-separate border-spacing-0 text-left">
            <thead>
              <tr>
                <th className="h-[34px] w-[456px] border-r-2 border-b-2 border-white bg-[#e4e4e4] pl-2.5 font-normal shadow-[inset_-2px_-2px_#808080]">
                  Variable
                </th>
                <th className="h-[34px] border-r-2 border-b-2 border-white bg-[#e4e4e4] pl-2.5 font-normal shadow-[inset_-2px_-2px_#808080]">
                  Value
                </th>
              </tr>
            </thead>
            <tbody>
              {INPUTS.map(([type, name, value]) => (
                <tr key={name} className="even:bg-[#ebebeb]">
                  <td className="h-10 border-r-2 border-b-2 border-[#c4c4c4] p-0 pl-0.5">
                    <span className="flex items-center gap-1.5 whitespace-pre">
                      <VariableIcon type={type} />
                      <span className="pt-1.5">{name}</span>
                    </span>
                  </td>
                  <td className="h-10 border-b-2 border-[#c4c4c4] p-0 pt-1.5 pl-1">{value}</td>
                </tr>
              ))}
            </tbody>
          </table>
        </div>
      </div>
      <div className="flex flex-col justify-end gap-5 pl-3.5">
        <DialogButton wide><u className="decoration-2 underline-offset-4">L</u>oad</DialogButton>
        <DialogButton wide><u className="decoration-2 underline-offset-4">S</u>ave</DialogButton>
      </div>
    </div>

    <div className="flex justify-end gap-3 px-4 pt-[22px] pb-4">
      <DialogButton isDefault>OK</DialogButton>
      <DialogButton>Cancel</DialogButton>
      <DialogButton>Reset</DialogButton>
    </div>
  </div>
);

export default function App() {
  return (
    <div className="relative flex h-screen flex-col overflow-hidden bg-[#e4e4e4] text-[21px] leading-[26px] text-black [font-family:'DejaVu_Sans_Condensed','DejaVu_Sans',sans-serif]">
      <MenuBar />
      <MainToolbar />
      <ChartToolbar />
      <ChartWindow />
      <ChartTabs />
      <StatusBar />
      <IndicatorDialog />
    </div>
  );
}
